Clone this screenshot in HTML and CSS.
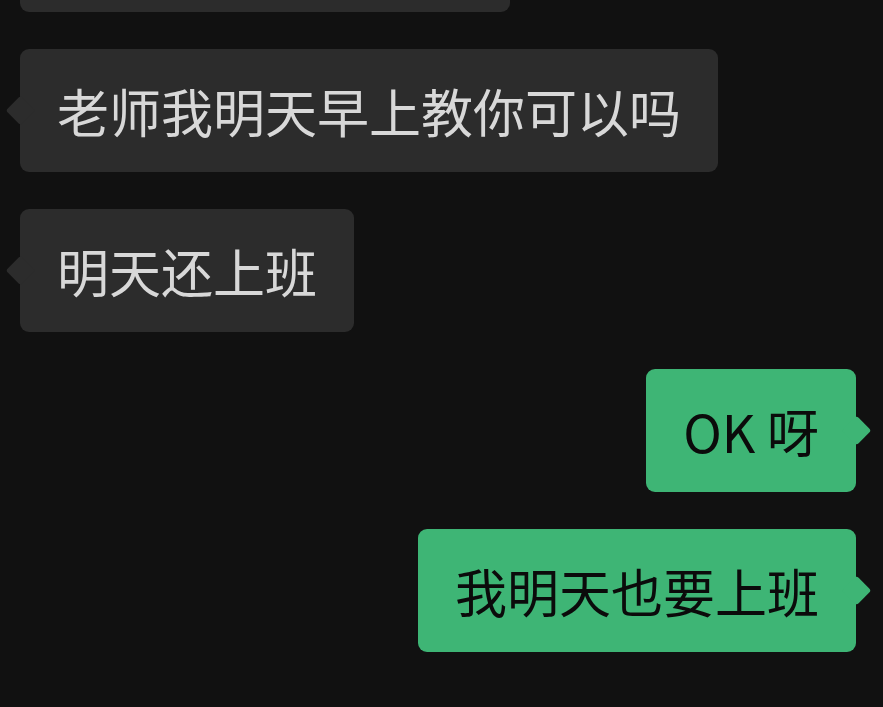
FILE: index.html
```html
<!DOCTYPE html>
<html lang="zh-CN">

<head>
    <meta charset="UTF-8" />
    <meta name="viewport" content="width=device-width, initial-scale=1" />
    <title>聊天</title>
    <link rel="stylesheet" href="styles.css">
</head>

<body>
    <div class="chat">
        <!-- previous message, scrolled out of view -->
        <div class="row left">
            <div class="bubble partial"></div>
        </div>
        <div class="row left">
            <div class="bubble">老师我明天早上教你可以吗</div>
        </div>
        <div class="row left">
            <div class="bubble">明天还上班</div>
        </div>
        <div class="row right">
            <div class="bubble">OK 呀</div>
        </div>
        <div class="row right">
            <div class="bubble">我明天也要上班</div>
        </div>
    </div>
</body>

</html>
```

FILE: styles.css
```css
:root {
    --bg: #111111;
    --bubble-dark: #2c2c2c;
    --bubble-green: #3eb575;
    --text-light: #d8d8d8;
    --text-dark: #0b0b0b;
}

* {
    box-sizing: border-box;
}

body {
    margin: 0;
    padding: 0;
    background-color: var(--bg);
    font-family: "Noto Sans CJK SC", "Noto Sans", sans-serif;
    overflow: hidden;
}

.chat {
    display: flex;
    flex-direction: column;
    gap: 37px;
    margin-top: -111px;
    padding: 0 27px 0 20px;
}

.row {
    display: flex;
}

.row.right {
    justify-content: flex-end;
}

.bubble {
    position: relative;
    padding: 25px 37px;
    height: 123px;
    font-size: 52px;
    line-height: 73px;
    border-radius: 9px;
    white-space: nowrap;
}

.bubble.partial {
    width: 490px;
}

.bubble::before {
    content: "";
    position: absolute;
    top: 50%;
    width: 21px;
    height: 21px;
    margin-top: -10.5px;
    border-radius: 3px;
    transform: rotate(45deg);
}

.left .bubble {
    background-color: var(--bubble-dark);
    color: var(--text-light);
}

.left .bubble::before {
    left: -10.5px;
    background-color: var(--bubble-dark);
}

.right .bubble {
    background-color: var(--bubble-green);
    color: var(--text-dark);
}

.right .bubble::before {
    right: -10.5px;
    background-color: var(--bubble-green);
}
```
